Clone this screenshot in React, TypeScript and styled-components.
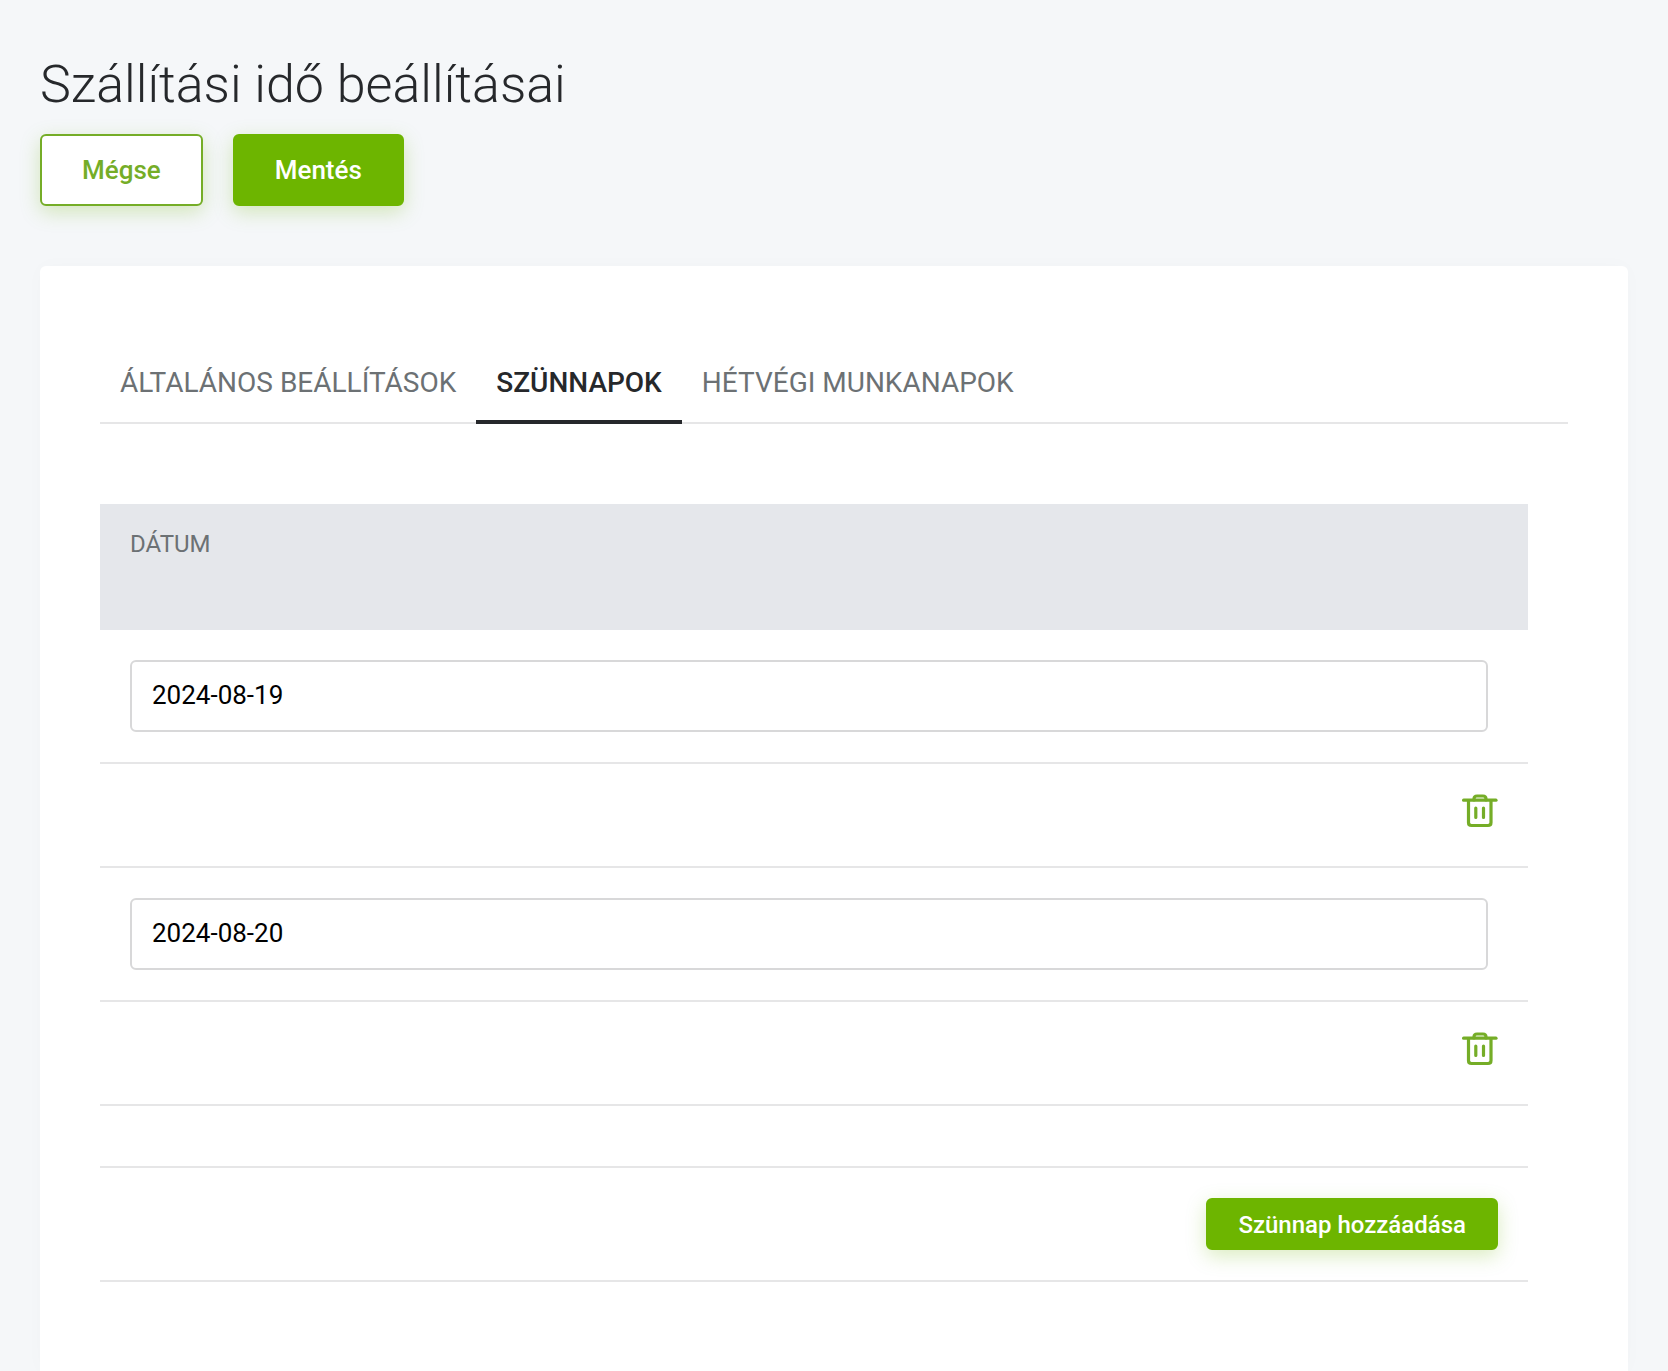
import React, { useState } from "react";
import styled, { createGlobalStyle, css } from "styled-components";

const color = {
  page: "#f5f7f9",
  green: "#6db500",
  greenText: "#75ad27",
  ink: "#26282b",
  muted: "#6c7174",
  line: "#e6e6e7",
  head: "#e5e7eb",
};

const GlobalStyle = createGlobalStyle`
  *, *::before, *::after { box-sizing: border-box; }
  body {
    margin: 0;
    background: ${color.page};
    color: ${color.ink};
    font-family: Roboto, "Liberation Sans", sans-serif;
  }
`;

const Page = styled.main`
  display: flex;
  flex-direction: column;
  min-height: 100vh;
  padding: 54px 40px 0;
`;

const Title = styled.h1`
  margin: 0 0 18px;
  font-size: 52px;
  line-height: 62px;
  font-weight: 300;
`;

const Actions = styled.div`
  display: flex;
  flex-wrap: wrap;
  gap: 30px;
  margin-bottom: 60px;
`;

const Button = styled.button<{ $outline?: boolean; $small?: boolean }>`
  border: 2px solid ${color.green};
  border-radius: 6px;
  padding: 0 40px;
  height: 72px;
  background: ${color.green};
  color: #fff;
  font: 500 26px/32px Roboto, "Liberation Sans", sans-serif;
  box-shadow: 0 6px 20px rgba(109, 181, 0, 0.25);
  cursor: pointer;
  ${(p) =>
    p.$outline &&
    css`
      background: #fff;
      border-color: ${color.greenText};
      color: ${color.greenText};
    `}
  ${(p) =>
    p.$small &&
    css`
      padding: 2px 30px 0;
      height: 52px;
      font-size: 24px;
    `}
`;

const Card = styled.section`
  flex: 1;
  padding: 80px 60px;
  background: #fff;
  border-radius: 6px 6px 0 0;
  box-shadow: 0 0 20px rgba(0, 0, 0, 0.02);
`;

const Tabs = styled.div`
  display: flex;
  box-shadow: inset 0 -2px ${color.line};
  margin-bottom: 80px;
`;

const Tab = styled.button<{ $active: boolean }>`
  height: 78px;
  padding: 0 20px;
  border: 0;
  border-bottom: 4px solid ${(p) => (p.$active ? color.ink : "transparent")};
  background: none;
  color: ${(p) => (p.$active ? color.ink : color.muted)};
  font: ${(p) => (p.$active ? 500 : 400)} 28px/36px Roboto, "Liberation Sans", sans-serif;
  text-transform: uppercase;
  cursor: pointer;
`;

const TableWrap = styled.div`
  padding-right: 40px;
`;

const Table = styled.table`
  width: 100%;
  border-spacing: 0;
`;

const HeadCell = styled.th`
  height: 126px;
  padding: 24px 30px;
  background: ${color.head};
  color: ${color.muted};
  font-size: 24px;
  line-height: 32px;
  font-weight: 400;
  text-align: left;
  vertical-align: top;
  text-transform: uppercase;
`;

const Cell = styled.td<{ $height?: number; $align?: "left" | "right" }>`
  height: ${(p) => (p.$height ? `${p.$height}px` : "auto")};
  padding: 30px;
  border-bottom: 2px solid ${color.line};
  text-align: ${(p) => p.$align ?? "left"};
  vertical-align: top;
`;

const DateCell = styled(Cell)`
  padding-right: 40px;
`;

const DateInput = styled.input`
  display: block;
  width: 100%;
  height: 72px;
  padding: 0 20px 2px;
  border: 2px solid #d8d8d9;
  border-radius: 6px;
  background: #fff;
  color: #000;
  font: 400 26px/32px Roboto, "Liberation Sans", sans-serif;
`;

const IconButton = styled.button`
  display: inline-flex;
  padding: 0;
  border: 0;
  background: none;
  color: ${color.greenText};
  cursor: pointer;
`;

const TrashIcon = () => (
  <svg width="36" height="34" viewBox="0 0 36 34" fill="none" stroke="currentColor" strokeWidth="3.2" strokeLinecap="round" strokeLinejoin="round" aria-hidden="true">
    <path d="M1.600 6.200h32.400" />
    <path d="M12 6V5q0-3 3-3h6q3 0 3 3V6" />
    <path d="M6.500 7v21.500q0 3 3 3h16.500q3 0 3-3V7" />
    <path d="M13.800 14v9.500M21.500 14v9.500" />
  </svg>
);

const TABS = ["Általános beállítások", "Szünnapok", "Hétvégi munkanapok"];

export default function App() {
  const [tab, setTab] = useState(1);
  const [dates, setDates] = useState(["2024-08-19", "2024-08-20"]);

  return (
    <>
      <GlobalStyle />
      <Page>
        <Title>Szállítási idő beállításai</Title>
        <Actions>
          <Button type="button" $outline>Mégse</Button>
          <Button type="button">Mentés</Button>
        </Actions>
        <Card>
          <Tabs role="tablist">
            {TABS.map((name, i) => (
              <Tab key={name} type="button" role="tab" aria-selected={i === tab} $active={i === tab} onClick={() => setTab(i)}>
                {name}
              </Tab>
            ))}
          </Tabs>
          <TableWrap>
            <Table>
              <thead>
                <tr>
                  <HeadCell scope="col" id="date-heading">Dátum</HeadCell>
                </tr>
              </thead>
              <tbody>
                {dates.map((date, i) => (
                  <React.Fragment key={i}>
                    <tr>
                      <DateCell>
                        <DateInput
                          type="text"
                          aria-labelledby="date-heading"
                          value={date}
                          onChange={(e) => setDates(dates.map((d, j) => (j === i ? e.target.value : d)))}
                        />
                      </DateCell>
                    </tr>
                    <tr>
                      <Cell $height={104} $align="right">
                        <IconButton type="button" aria-label="Törlés" onClick={() => setDates(dates.filter((_, j) => j !== i))}>
                          <TrashIcon />
                        </IconButton>
                      </Cell>
                    </tr>
                  </React.Fragment>
                ))}
                <tr>
                  <Cell $height={62} />
                </tr>
                <tr>
                  <Cell $height={114} $align="right">
                    <Button type="button" $small onClick={() => setDates([...dates, ""])}>Szünnap hozzáadása</Button>
                  </Cell>
                </tr>
              </tbody>
            </Table>
          </TableWrap>
        </Card>
      </Page>
    </>
  );
}
